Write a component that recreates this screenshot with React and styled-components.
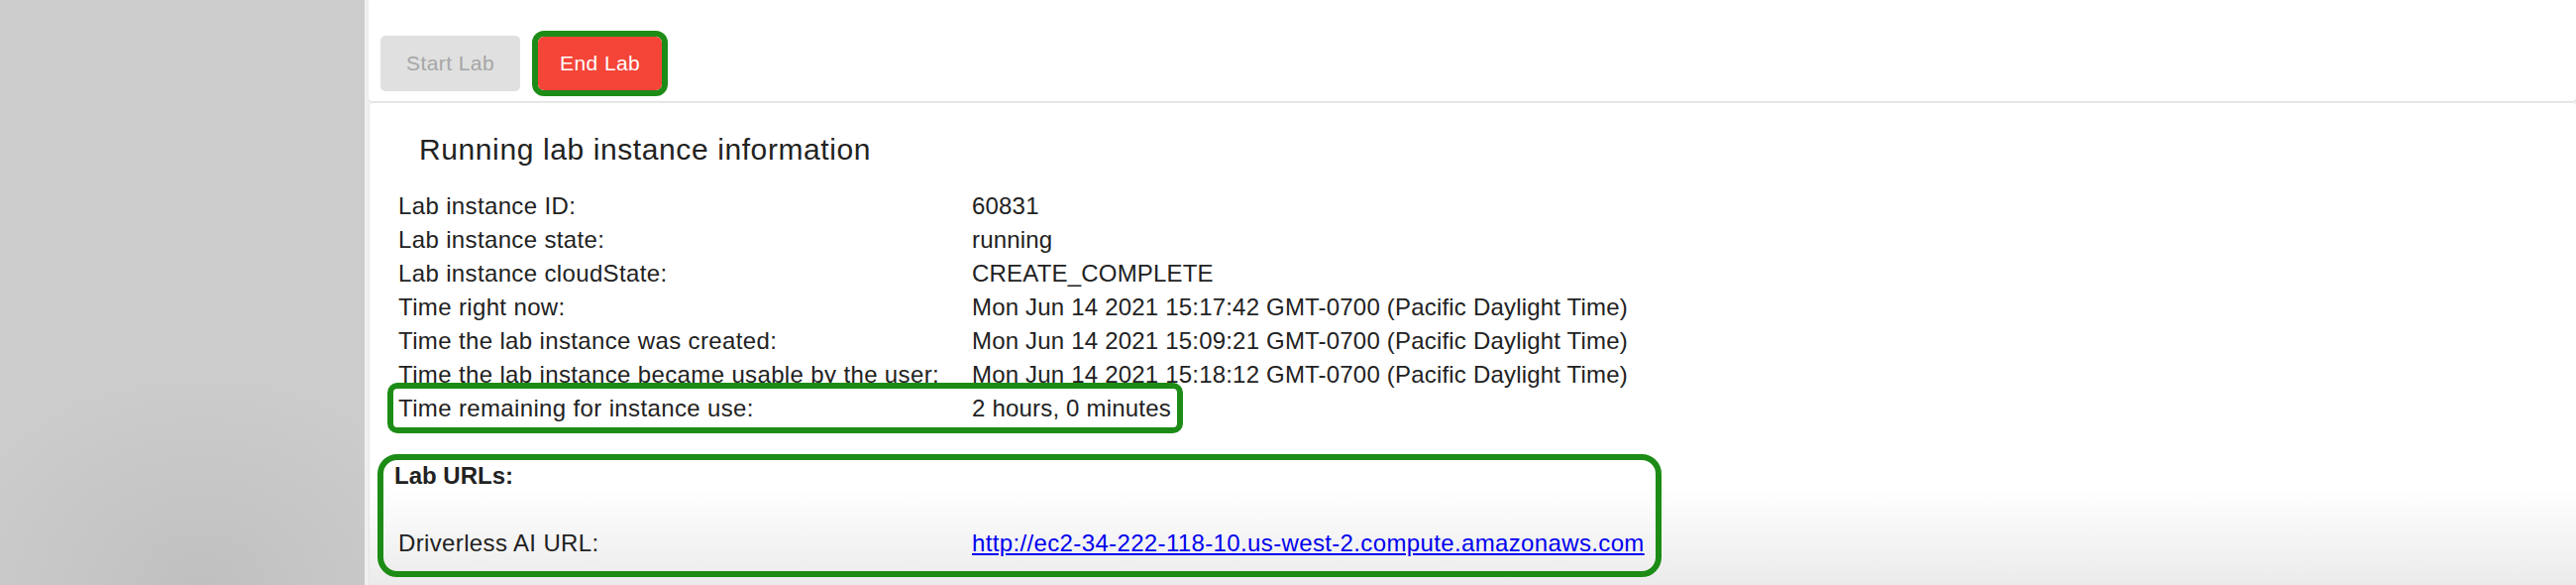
import React from 'react';
import styled, { createGlobalStyle } from 'styled-components';

const GlobalStyle = createGlobalStyle`
  html, body {
    margin: 0;
    padding: 0;
  }
  body {
    font-family: "Liberation Sans", Arial, sans-serif;
    color: #222;
    background: #f0f0f0;
  }
`;

const Page = styled.div`
  display: flex;
  height: 590px;
  overflow: hidden;
`;

const Sidebar = styled.aside`
  width: 368px;
  flex-shrink: 0;
  background: radial-gradient(ellipse 70% 35% at 55% 100%, #c0c0c0 0%, #cccccc 100%);
`;

const Main = styled.main`
  flex: 1;
  display: flex;
  flex-direction: column;
  gap: 2px;
  padding-left: 4px;
  background: #f0f0f0;
`;

const Toolbar = styled.div`
  height: 102px;
  box-sizing: border-box;
  display: flex;
  align-items: center;
  gap: 12px;
  padding: 26px 12px 0;
  background: #fff;
  border-radius: 0 0 4px 4px;
  box-shadow: 0 1px 2px rgba(0, 0, 0, 0.08);
`;

const LabButton = styled.button`
  font-family: inherit;
  font-size: 21px;
  letter-spacing: 0.02em;
  border: none;
  border-radius: 5px;
  height: ${p => (p.$danger ? 54 : 56)}px;
  padding: 0 ${p => (p.$danger ? 22 : 26)}px;
  background: ${p => (p.$danger ? '#f44538' : '#e0e0e0')};
  color: ${p => (p.$danger ? '#fff' : '#a6a6a6')};
  cursor: ${p => (p.$danger ? 'pointer' : 'default')};
`;

const ButtonMark = styled.span`
  display: inline-flex;
  border: 6px solid #1d8c16;
  border-radius: 12px;
  overflow: hidden;
`;

const InfoPanel = styled.section`
  flex: 1;
  padding: 0 0 0 25px;
  border-left: 1px solid #e4e4e4;
  border-radius: 4px 4px 0 0;
  background: linear-gradient(to bottom, #fff 0%, #fff 80%, #ebebeb 100%);
`;

const Heading = styled.h2`
  margin: 29px 0 22px;
  padding-left: 25px;
  font-size: 30px;
  font-weight: 400;
  line-height: 36px;
  letter-spacing: 0.02em;
`;

const Row = styled.div`
  display: grid;
  grid-template-columns: 579px max-content;
  font-size: 24px;
  line-height: 34px;
  white-space: nowrap;
`;

const Cell = styled.div`
  padding: 0 4px;
  letter-spacing: ${p => (p.$value ? '0.008em' : '0.015em')};
`;

const RowMark = styled.div`
  position: relative;
  width: fit-content;
  margin: -9px 0 -10px -7px;
  padding: 3px 2px 2px 1px;
  border: 6px solid #1d8c16;
  border-radius: 10px;
`;

const UrlBox = styled.div`
  width: fit-content;
  margin: 31px 0 0 -17px;
  padding: 1px 7px 11px 11px;
  border: 6px solid #1d8c16;
  border-radius: 20px;
`;

const UrlTitle = styled.div`
  font-size: 24px;
  font-weight: 700;
  line-height: 30px;
  margin-bottom: 36px;
`;

const UrlLink = styled.a`
  color: #0000ee;
  text-decoration: underline;
  letter-spacing: 0.015em;
`;

const info = [
  ['Lab instance ID:', '60831'],
  ['Lab instance state:', 'running'],
  ['Lab instance cloudState:', 'CREATE_COMPLETE'],
  ['Time right now:', 'Mon Jun 14 2021 15:17:42 GMT-0700 (Pacific Daylight Time)'],
  ['Time the lab instance was created:', 'Mon Jun 14 2021 15:09:21 GMT-0700 (Pacific Daylight Time)'],
  ['Time the lab instance became usable by the user:', 'Mon Jun 14 2021 15:18:12 GMT-0700 (Pacific Daylight Time)'],
];

const driverlessUrl = 'http://ec2-34-222-118-10.us-west-2.compute.amazonaws.com';

export default function App() {
  return (
    <>
      <GlobalStyle />
      <Page>
        <Sidebar />
        <Main>
          <Toolbar>
            <LabButton disabled>Start Lab</LabButton>
            <ButtonMark>
              <LabButton $danger>End Lab</LabButton>
            </ButtonMark>
          </Toolbar>
          <InfoPanel>
            <Heading>Running lab instance information</Heading>
            {info.map(([label, value]) => (
              <Row key={label}>
                <Cell>{label}</Cell>
                <Cell $value>{value}</Cell>
              </Row>
            ))}
            <RowMark>
              <Row>
                <Cell>Time remaining for instance use:</Cell>
                <Cell $value>2 hours, 0 minutes</Cell>
              </Row>
            </RowMark>
            <UrlBox>
              <UrlTitle>Lab URLs:</UrlTitle>
              <Row>
                <Cell>Driverless AI URL:</Cell>
                <Cell>
                  <UrlLink href="#">{driverlessUrl}</UrlLink>
                </Cell>
              </Row>
            </UrlBox>
          </InfoPanel>
        </Main>
      </Page>
    </>
  );
}
